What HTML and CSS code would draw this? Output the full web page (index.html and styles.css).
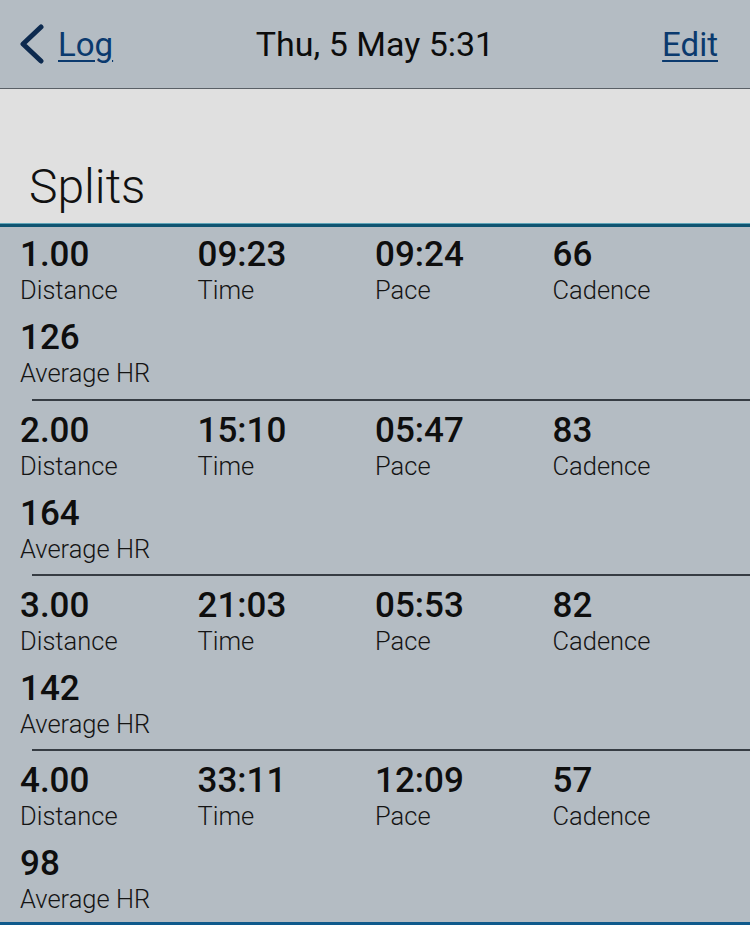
FILE: index.html
```html
<!DOCTYPE html>
<html>
<head>
<meta charset="utf-8">
<link rel="stylesheet" href="styles.css">
</head>
<body>
<div class="screen">
  <header class="topbar">
    <a class="back" href="#">
      <svg class="chev" width="28" height="40" viewBox="0 0 28 40"><path d="M23 3 L5 20 L23 37" fill="none" stroke="#0d2a4f" stroke-width="5" stroke-linecap="round" stroke-linejoin="round"/></svg>
      <span class="link">Log</span>
    </a>
    <div class="title">Thu, 5 May 5:31</div>
    <a class="link edit" href="#">Edit</a>
  </header>
  <div class="band">
    <h1 class="section">Splits</h1>
  </div>
  <div class="splits">
    <div class="split">
      <div class="cell"><div class="val">1.00</div><div class="lbl">Distance</div></div>
      <div class="cell"><div class="val">09:23</div><div class="lbl">Time</div></div>
      <div class="cell"><div class="val">09:24</div><div class="lbl">Pace</div></div>
      <div class="cell"><div class="val">66</div><div class="lbl">Cadence</div></div>
      <div class="cell"><div class="val">126</div><div class="lbl">Average HR</div></div>
    </div>
    <div class="split">
      <div class="cell"><div class="val">2.00</div><div class="lbl">Distance</div></div>
      <div class="cell"><div class="val">15:10</div><div class="lbl">Time</div></div>
      <div class="cell"><div class="val">05:47</div><div class="lbl">Pace</div></div>
      <div class="cell"><div class="val">83</div><div class="lbl">Cadence</div></div>
      <div class="cell"><div class="val">164</div><div class="lbl">Average HR</div></div>
    </div>
    <div class="split">
      <div class="cell"><div class="val">3.00</div><div class="lbl">Distance</div></div>
      <div class="cell"><div class="val">21:03</div><div class="lbl">Time</div></div>
      <div class="cell"><div class="val">05:53</div><div class="lbl">Pace</div></div>
      <div class="cell"><div class="val">82</div><div class="lbl">Cadence</div></div>
      <div class="cell"><div class="val">142</div><div class="lbl">Average HR</div></div>
    </div>
    <div class="split">
      <div class="cell"><div class="val">4.00</div><div class="lbl">Distance</div></div>
      <div class="cell"><div class="val">33:11</div><div class="lbl">Time</div></div>
      <div class="cell"><div class="val">12:09</div><div class="lbl">Pace</div></div>
      <div class="cell"><div class="val">57</div><div class="lbl">Cadence</div></div>
      <div class="cell"><div class="val">98</div><div class="lbl">Average HR</div></div>
    </div>
  </div>
</div>
</body>
</html>
```
FILE: styles.css
```css
* { box-sizing: border-box; }
html, body { margin: 0; padding: 0; }
body {
  font-family: Roboto, "Liberation Sans", sans-serif;
  background: #b4bcc3;
  color: #111;
  width: 750px;
  height: 925px;
  overflow: hidden;
}
.screen { display: flex; flex-direction: column; height: 925px; }
.topbar {
  flex: 0 0 89px;
  height: 89px;
  background: #b4bcc3;
  border-bottom: 1px solid #5a6066;
  display: flex;
  align-items: center;
  justify-content: space-between;
  padding: 0 32px 0 18px;
  position: relative;
}
.back { display: flex; align-items: center; gap: 12px; text-decoration: none; }
.chev { display: block; margin-top: -1px; }
.link {
  font-size: 33px;
  color: #0b3a6e;
  text-decoration: underline;
  text-underline-offset: 4px;
  text-decoration-thickness: 2px;
}
.title {
  position: absolute;
  left: 0; right: 0;
  text-align: center;
  font-size: 34px;
  color: #0c0c0c;
  pointer-events: none;
}
.edit { position: relative; }
.band {
  flex: 0 0 138px;
  height: 138px;
  background: #e0e0e0;
  border-bottom: 3px solid #0f5471;
  box-shadow: inset 0 -1px 0 #5fa5b8;
  display: flex;
  align-items: flex-end;
  padding: 0 0 10px 29px;
}
.section {
  margin: 0;
  font-size: 48px;
  font-weight: 300;
  color: #111;
  line-height: 54px;
}
.splits { flex: 0 0 698px; background: #b4bcc3; border-bottom: 3px solid #0f5a8c; }
.split {
  height: 175px;
  display: grid;
  grid-template-columns: repeat(4, 177.5px);
  row-gap: 13px;
  align-content: start;
  padding: 10px 0 0 20px;
  position: relative;
}
.split:first-child { height: 172px; padding-top: 8px; }
.split:last-child { height: 173px; }
.split + .split { border-top: 2px solid transparent; }
.split + .split::before {
  content: "";
  position: absolute;
  top: -2px;
  left: 32px;
  right: 0;
  height: 2px;
  background: #363c43;
}
.val { font-size: 35px; font-weight: 500; line-height: 40px; color: #0e0e0e; }
.lbl { font-size: 25.5px; font-weight: 300; line-height: 30px; color: #141414; }
```
